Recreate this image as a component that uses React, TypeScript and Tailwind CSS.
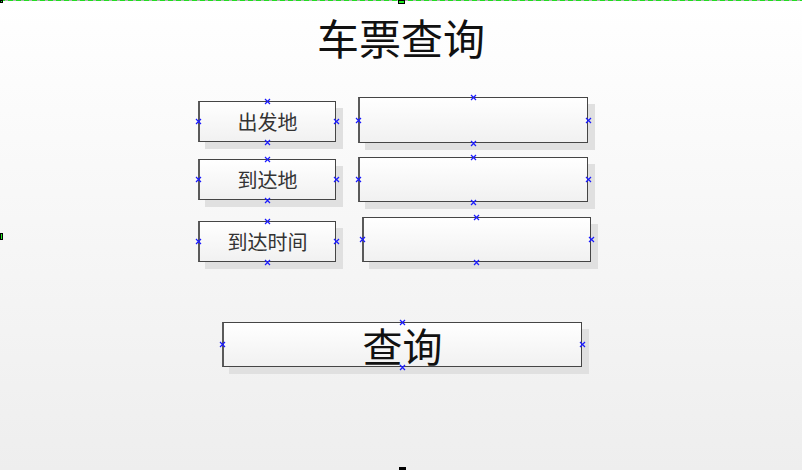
import React from "react";

const cjk = { fontFamily: '"Noto Sans CJK SC", "Noto Sans", sans-serif' };

// small connection-point cross on a shape edge
const Mark = ({ className }: { className: string }) => (
  <svg
    className={`absolute w-[7px] h-[7px] -ml-[3.5px] -mt-[3.5px] ${className}`}
    viewBox="0 0 7 7"
  >
    <path d="M1 1L6 6M6 1L1 6" stroke="#1a1aff" strokeWidth="1.2" />
  </svg>
);

const Box = ({
  className,
  children,
}: {
  className: string;
  children?: React.ReactNode;
}) => (
  <div className={`relative shrink-0 ${className}`}>
    <div
      className="w-full h-full border border-[#454545] border-l-2 border-l-[#5a5a5a] bg-gradient-to-b from-white to-[#f1f1f1] shadow-[7px_7px_0_#e0e0e0] flex items-center justify-center"
      style={cjk}
    >
      {children}
    </div>
    <Mark className="left-1/2 top-0" />
    <Mark className="left-1/2 top-full" />
    <Mark className="left-0 top-1/2" />
    <Mark className="left-full top-1/2" />
  </div>
);

const label = "w-[138px] h-[41px] text-[20px] text-[#333]";

export default function App() {
  return (
    <div className="relative w-[802px] h-[470px] overflow-hidden bg-gradient-to-b from-white to-[#eeeeee]">
      {/* page selection frame */}
      <div className="absolute left-0 top-0 w-full h-px bg-[repeating-linear-gradient(90deg,#22dd22_0_5px,#b0b0b0_5px_8px)]" />
      <div className="absolute left-0 top-0 w-[3px] h-[3px] bg-[#22ee22] border border-black" />
      <div className="absolute left-[398px] top-0 w-[7px] h-[4px] bg-[#22ee22] border border-black" />
      <div className="absolute left-0 top-[233px] w-[3px] h-[7px] bg-[#22ee22] border border-black" />
      <div className="absolute left-[399px] top-[467px] w-[7px] h-[3px] bg-black" />

      <div className="flex flex-col pt-[14px]">
        <div
          className="text-center text-[42px] leading-[46px] text-[#111]"
          style={cjk}
        >
          车票查询
        </div>

        <div className="flex flex-col pl-[198px] mt-[37px]">
          <div className="flex items-start gap-[22px]">
            <Box className={`${label} mt-[4px]`}>出发地</Box>
            <Box className="w-[230px] h-[46px]" />
          </div>
          <div className="flex items-start gap-[22px] mt-[14px]">
            <Box className={`${label} mt-[2px]`}>到达地</Box>
            <Box className="w-[230px] h-[45px]" />
          </div>
          <div className="flex items-start gap-[26px] mt-[15px]">
            <Box className={`${label} mt-[4px]`}>到达时间</Box>
            <Box className="w-[229px] h-[45px]" />
          </div>

          <Box className="w-[360px] h-[45px] ml-[24px] mt-[60px] text-[40px] leading-none text-[#111]">
            查询
          </Box>
        </div>
      </div>
    </div>
  );
}
